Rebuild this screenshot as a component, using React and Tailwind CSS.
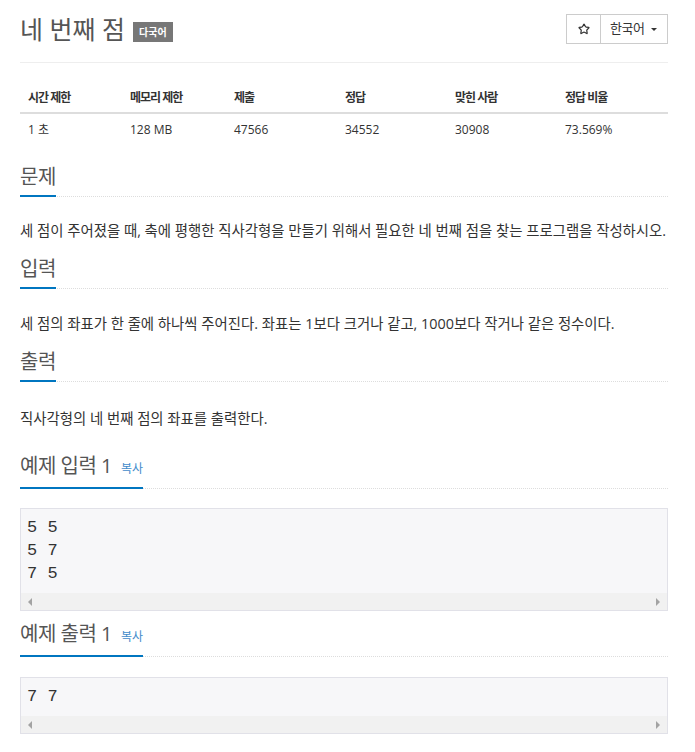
import React from "react";
import { Star } from "lucide-react";

const FONT = { fontFamily: '"Open Sans", "Noto Sans CJK KR", sans-serif' };

const stats = [
  { label: "시간 제한", value: "1 초", w: "w-[102px]" },
  { label: "메모리 제한", value: "128 MB", w: "w-[104px]" },
  { label: "제출", value: "47566", w: "w-[111px]" },
  { label: "정답", value: "34552", w: "w-[110px]" },
  { label: "맞힌 사람", value: "30908", w: "w-[110px]" },
  { label: "정답 비율", value: "73.569%", w: "w-[111px]" },
];

function Headline({ children, copy, className = "" }) {
  return (
    <div className={`border-b border-dotted border-[#ddd] ${className}`}>
      <h2 className="inline-flex items-baseline gap-[9px] -mb-px pb-[5px] border-b-2 border-[#0076c0] text-[20px] leading-[26px] tracking-[-0.5px] text-[#555] font-normal">
        <span>{children}</span>
        {copy && <span className="text-[12px] tracking-normal text-[#428bca]">복사</span>}
      </h2>
    </div>
  );
}

function SampleBox({ lines, className = "" }) {
  return (
    <div className={`border border-[#e1e1e8] bg-[#f7f7f9] ${className}`}>
      <pre
        className="px-[6px] pt-[6.5px] pb-[8.5px] text-[17px] leading-[23px] text-[#333]"
        style={{ fontFamily: '"Liberation Mono", monospace' }}
      >
        {lines.join("\n")}
      </pre>
      <div className="h-[17px] bg-[#f1f1f1] flex items-center justify-between px-[7px]">
        <span className="w-0 h-0 border-y-[4px] border-y-transparent border-r-[4px] border-r-[#a3a3a3]" />
        <span className="w-0 h-0 border-y-[4px] border-y-transparent border-l-[4px] border-l-[#a3a3a3]" />
      </div>
    </div>
  );
}

export default function App() {
  return (
    <div className="w-[695px] min-h-[752px] bg-white pl-[20px] pr-[27px] text-[#333]" style={FONT}>
      {/* header */}
      <div className="flex items-center justify-between pt-[14px] pb-[18px] border-b border-[#eee]">
        <div className="flex items-center gap-[8px] h-[30px]">
          <h1 className="text-[25px] leading-[30px] text-[#555] font-normal">네 번째 점</h1>
          <span className="mt-[6px] h-[20px] px-[6px] flex items-center bg-[#777] text-white text-[10px] font-bold">다국어</span>
        </div>
        <div className="flex h-[30px]">
          <button className="w-[35px] h-[30px] border border-[#ccc] bg-white flex items-center justify-center text-[#333]">
            <Star size={12} strokeWidth={2.4} />
          </button>
          <button className="w-[68px] h-[30px] -ml-px border border-[#ccc] bg-white flex items-center justify-between pl-[9px] pr-[10px] text-[13px] text-[#333]">
            <span className="tracking-[-0.5px]">한국어</span>
            <span className="w-0 h-0 border-x-[3px] border-x-transparent border-t-[3px] border-t-[#333]" />
          </button>
        </div>
      </div>

      {/* stats table */}
      <table className="mt-[20px] w-full text-[12px] border-collapse">
        <thead>
          <tr className="border-b-2 border-[#ddd]">
            {stats.map((s) => (
              <th key={s.label} className={`${s.w} px-[8px] pt-[8px] pb-[7px] leading-[14px] text-left font-bold tracking-[-1px]`}>
                {s.label}
              </th>
            ))}
          </tr>
        </thead>
        <tbody>
          <tr>
            {stats.map((s) => (
              <td key={s.label} className="px-[8px] pt-[8px] pb-[6px] leading-[16px] text-left">
                {s.value}
              </td>
            ))}
          </tr>
        </tbody>
      </table>

      {/* 문제 */}
      <Headline className="mt-[20px]">문제</Headline>
      <p className="mt-[24px] text-[14.4px] leading-[20px] whitespace-nowrap">
        세 점이 주어졌을 때, 축에 평행한 직사각형을 만들기 위해서 필요한 네 번째 점을 찾는 프로그램을 작성하시오.
      </p>

      {/* 입력 */}
      <Headline className="mt-[15px]">입력</Headline>
      <p className="mt-[25px] text-[14.4px] leading-[20px] whitespace-nowrap">
        세 점의 좌표가 한 줄에 하나씩 주어진다. 좌표는 1보다 크거나 같고, 1000보다 작거나 같은 정수이다.
      </p>

      {/* 출력 */}
      <Headline className="mt-[15px]">출력</Headline>
      <p className="mt-[27px] text-[14.4px] leading-[20px] whitespace-nowrap">
        직사각형의 네 번째 점의 좌표를 출력한다.
      </p>

      {/* 예제 입력 */}
      <Headline copy className="mt-[24px]">예제 입력 1</Headline>
      <SampleBox className="mt-[19px]" lines={["5 5", "5 7", "7 5"]} />

      {/* 예제 출력 */}
      <Headline copy className="mt-[10px]">예제 출력 1</Headline>
      <SampleBox className="mt-[20px]" lines={["7 7"]} />
    </div>
  );
}
